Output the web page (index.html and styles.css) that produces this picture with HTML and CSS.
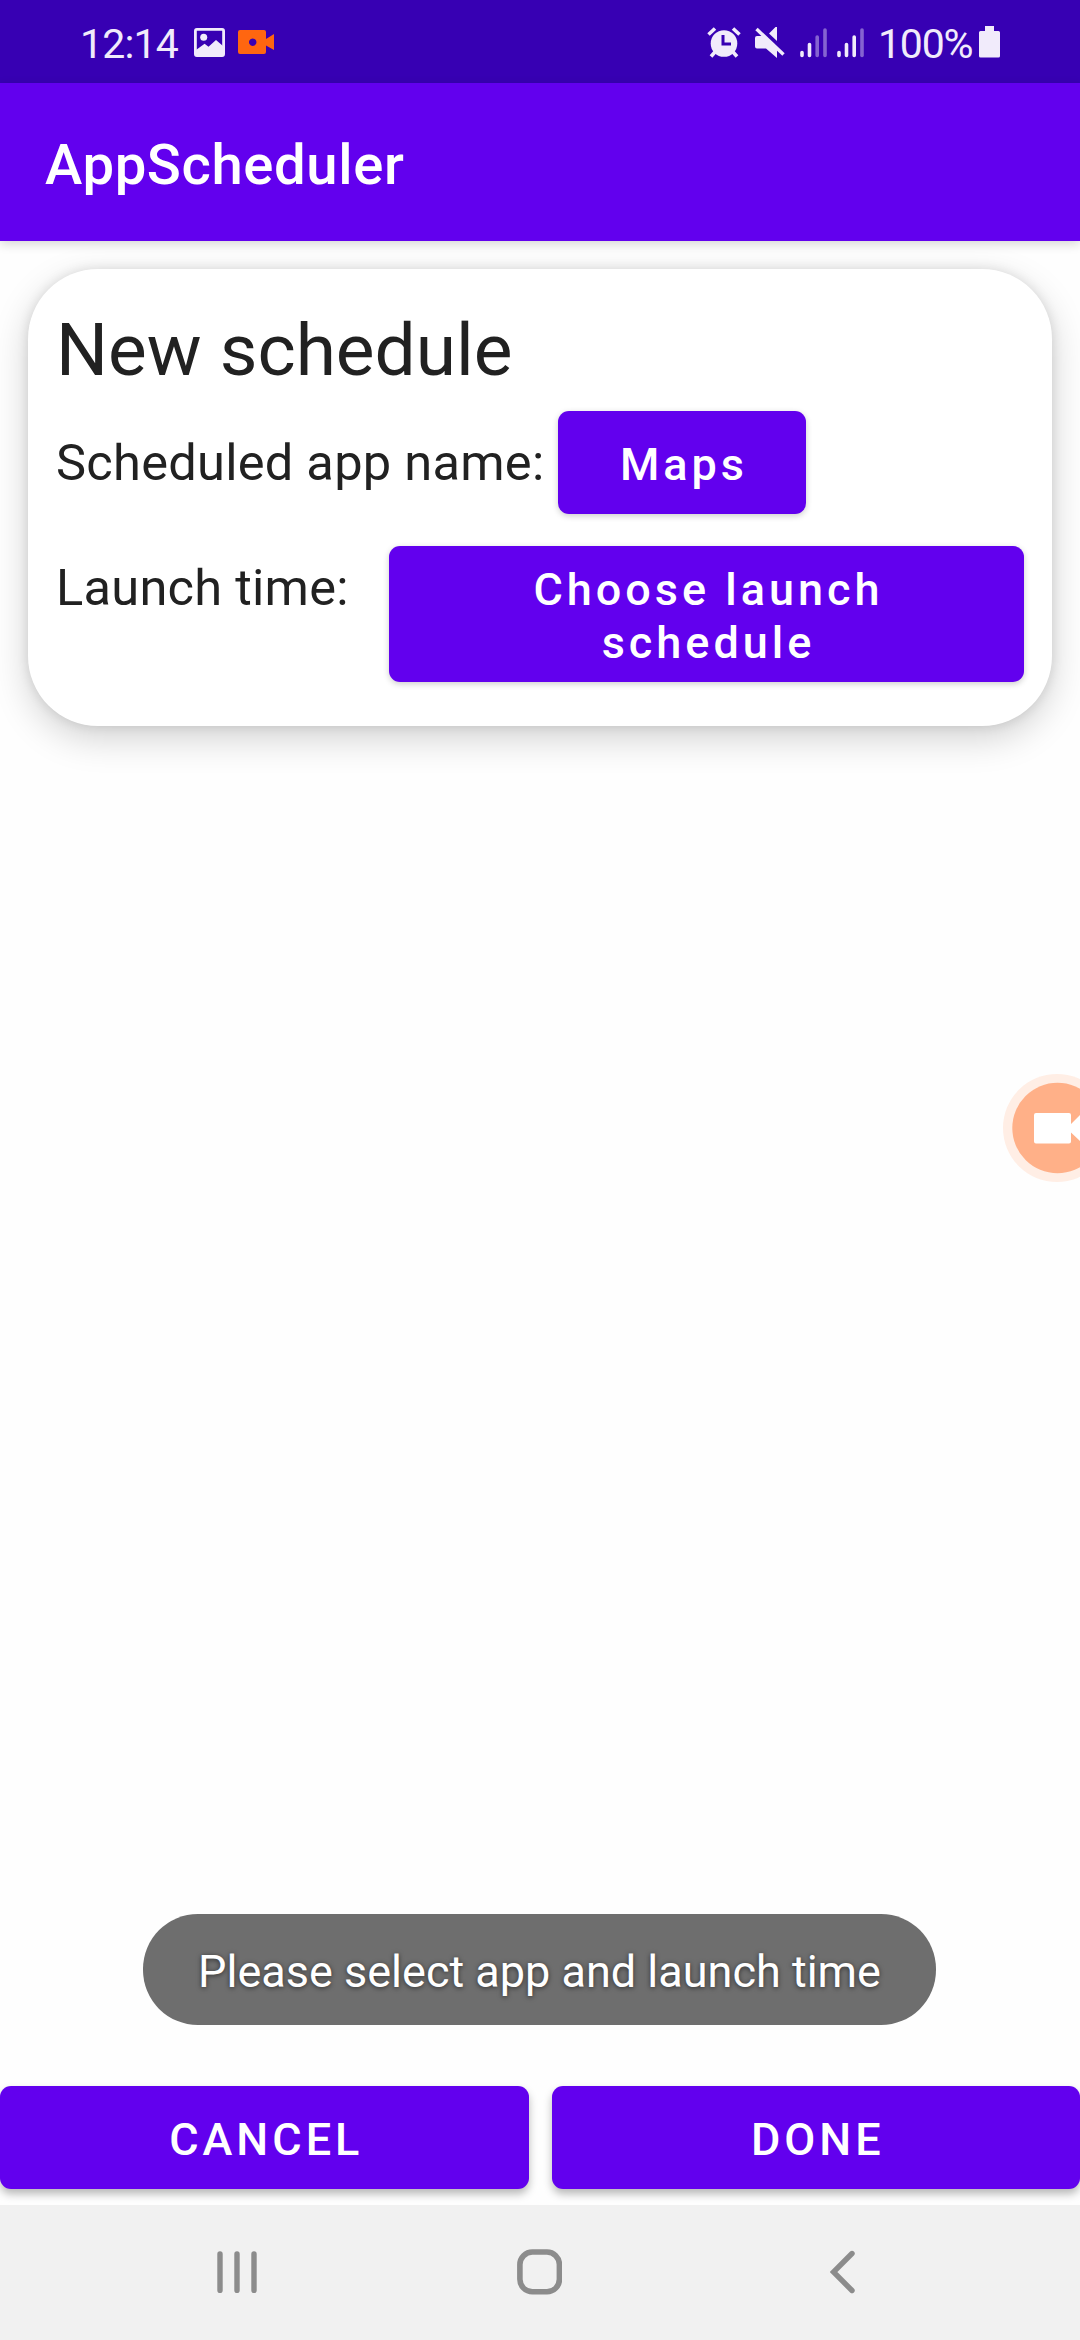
FILE: index.html
```html
<!DOCTYPE html>
<html lang="en">
<head>
<meta charset="utf-8">
<title>AppScheduler</title>
<link rel="stylesheet" href="styles.css">
</head>
<body>
<div class="screen">
  <header class="status-bar">
    <span class="clock">12:14</span>
    <svg class="icon-image" width="31" height="29" viewBox="0 0 31 29"><rect x="1.4" y="1.4" width="28.2" height="26.2" rx="1.5" fill="none" stroke="#f1ebfb" stroke-width="2.8"/><circle cx="9.7" cy="9.3" r="3.5" fill="#f1ebfb"/><path d="M2 22L10.6 15.7 14.5 18.8 22 12 29 18V27.500H2z" fill="#f1ebfb"/></svg>
    <svg class="icon-record" width="36" height="24" viewBox="0 0 36 24"><path fill="#ff6610" fill-rule="evenodd" d="M2 0H26a2 2 0 0 1 2 2V9L36 4V20L28 15.500V22a2 2 0 0 1-2 2H2a2 2 0 0 1-2-2V2a2 2 0 0 1 2-2zM14.700 8.500a3.700 3.700 0 1 0 .01 0z"/></svg>
    <span class="spacer"></span>
    <svg class="icon-alarm" width="34" height="31" viewBox="0 0 34 31"><g stroke="#f1ebfb" stroke-width="3.600" fill="none"><path d="M1.500 7.500L8 1.500M26 1.500L32.500 7.500M8 25L4 29.500M26 25L30 29.500"/></g><circle cx="17" cy="16.500" r="13.300" fill="#f1ebfb"/><path d="M16 8V17H24" fill="none" stroke="#3700b3" stroke-width="3"/></svg>
    <svg class="icon-mute" width="30" height="31" viewBox="0 0 30 31"><path fill="#f1ebfb" d="M2 9H8L22 22V31L11 21.500H2a2 2 0 0 1-2-2V11a2 2 0 0 1 2-2zM14 6.500L20.500 0H22V14z"/><path d="M1.500 2L28.500 27.500" stroke="#f1ebfb" stroke-width="3.400"/></svg>
    <svg class="icon-signal" width="27" height="30" viewBox="0 0 27 30" stroke="#f1ebfb" stroke-width="3.600" stroke-linecap="round"><path d="M2 24.500V27.500M9.500 16.500V27.500"/><path d="M17.200 9V27.500M25 2V27.500" opacity=".42"/></svg>
    <svg class="icon-signal second" width="27" height="30" viewBox="0 0 27 30" stroke="#f1ebfb" stroke-width="3.600" stroke-linecap="round"><path d="M2 24.500V27.500M9.500 16.500V27.500M17.200 9V27.500"/><path d="M25 2V27.500" opacity=".42"/></svg>
    <span class="charge">100%</span>
    <svg class="icon-battery" width="21" height="32" viewBox="0 0 21 32"><path fill="#f1ebfb" d="M6 0H15V5H19.500A1.500 1.500 0 0 1 21 6.500V30A1.500 1.500 0 0 1 19.500 31.500H1.500A1.500 1.500 0 0 1 0 30V6.500A1.500 1.500 0 0 1 1.500 5H6z"/></svg>
  </header>
  <div class="app-bar"><h1 class="app-title">AppScheduler</h1></div>
  <main class="content">
    <section class="card">
      <h2 class="card-title">New schedule</h2>
      <div class="row">
        <span class="label label-app">Scheduled app name:</span>
        <button class="btn btn-app">Maps</button>
      </div>
      <div class="row row-time">
        <span class="label label-time">Launch time:</span>
        <button class="btn btn-time">Choose launch<br>schedule</button>
      </div>
    </section>
    <div class="actions">
      <button class="btn btn-action">CANCEL</button>
      <button class="btn btn-action">DONE</button>
    </div>
  </main>
  <nav class="nav-bar">
    <svg class="nav-recents" width="40" height="42" viewBox="0 0 40 42"><path d="M3 3V39.500M20 3V39.500M37 3V39.500" stroke="#8c8c8c" stroke-width="5.400" stroke-linecap="round"/></svg>
    <svg class="nav-home" width="45" height="46" viewBox="0 0 45 46"><rect x="2.900" y="3" width="39.500" height="39.800" rx="12.500" fill="none" stroke="#8c8c8c" stroke-width="5.600"/></svg>
    <svg class="nav-back" width="26" height="44" viewBox="0 0 26 44"><path d="M22 3.500L3.500 22 22 40.500" fill="none" stroke="#8c8c8c" stroke-width="5.400" stroke-linecap="round"/></svg>
  </nav>
  <div class="toast">Please select app and launch time</div>
  <svg class="recorder" width="77" height="110" viewBox="0 0 77 110"><circle cx="54" cy="55" r="54" fill="#ffeee5"/><circle cx="54.500" cy="55" r="45.200" fill="#ffb088"/><path fill="#fff" d="M33 40H66a2 2 0 0 1 2 2V51L78 41V69L68 59.500V68.500a2 2 0 0 1-2 2H33a2 2 0 0 1-2-2V42a2 2 0 0 1 2-2z"/></svg>
</div>
</body>
</html>
```
FILE: styles.css
```css
* { box-sizing: border-box; }
body { margin: 0; background: #fff; font-family: Roboto, "Liberation Sans", sans-serif; }
h1, h2 { margin: 0; }
svg { display: block; flex: none; }

.screen { position: relative; display: flex; flex-direction: column; width: 1080px; height: 2340px; overflow: hidden; background: #fefefe; }

.status-bar { display: flex; align-items: flex-start; height: 83px; flex: none; padding: 0 80px; background: #3700b3; color: #f1ebfb; font-size: 41px; line-height: 88px; white-space: nowrap; }
.clock { width: 114px; letter-spacing: -0.8px; }
.icon-image { margin-top: 28px; }
.icon-record { margin: 30px 0 0 13px; }
.spacer { flex: 1; }
.icon-alarm { margin: 27px 14px 0 0; }
.icon-mute { margin: 27px 15px 0 0; }
.icon-signal { margin: 28px 10px 0 0; }
.icon-signal.second { margin-right: 14px; }
.charge { width: 101px; letter-spacing: -1.2px; }
.icon-battery { margin-top: 26px; }

.app-bar { position: relative; display: flex; align-items: center; flex: none; height: 158px; padding: 5px 45px 0; background: #6200ee; box-shadow: 0 3px 10px rgba(0, 0, 0, 0.16); }
.app-title { color: #fff; font-size: 56.25px; font-weight: 500; line-height: 66px; letter-spacing: 0.6px; }

.content { flex: 1; display: flex; flex-direction: column; justify-content: space-between; padding: 28px 0 16px; }
.card { height: 457px; margin: 0 28px; padding: 28px; border-radius: 70px; background: #fff; box-shadow: 0 12px 36px rgba(0, 0, 0, 0.18), 0 0 12px rgba(0, 0, 0, 0.11); }
.card-title { color: #212121; font-size: 73px; font-weight: 400; line-height: 106px; height: 114px; }
.row { display: flex; align-items: center; }
.row-time { align-items: flex-start; margin-top: 32px; }
.label { color: #212121; font-size: 50.6px; line-height: 59px; letter-spacing: 0.25px; white-space: nowrap; }
.label-app { width: 502px; }
.label-time { width: 333px; margin-top: 12px; }

.btn { border: 0; border-radius: 11px; padding: 4px 0 0 4px; background: #6200ee; color: #fff; font-family: inherit; font-size: 45px; font-weight: 500; line-height: 53px; letter-spacing: 4px; box-shadow: 0 2px 6px rgba(0, 0, 0, 0.2); }
.btn-app { width: 248px; height: 103px; }
.btn-time { width: 635px; height: 136px; }
.actions { display: flex; gap: 23px; }
.btn-action { flex: 1; height: 103px; box-shadow: 0 5px 8px rgba(0, 0, 0, 0.28); }

.nav-bar { position: relative; display: flex; flex: none; height: 135px; padding-left: 217px; background: #f1f1f1; }
.nav-recents { margin-top: 46px; }
.nav-home { margin: 44px 0 0 260px; }
.nav-back { margin: 45px 0 0 268px; }

.toast { position: absolute; left: 143px; top: 1914px; width: 793px; height: 111px; padding-top: 3px; border-radius: 55px; background: #6e6e6e; color: #fff; font-size: 45px; line-height: 110px; text-align: center; white-space: nowrap; text-shadow: 0 1px 5px rgba(0, 0, 0, 0.6); }
.recorder { position: absolute; left: 1003px; top: 1073px; }
```
